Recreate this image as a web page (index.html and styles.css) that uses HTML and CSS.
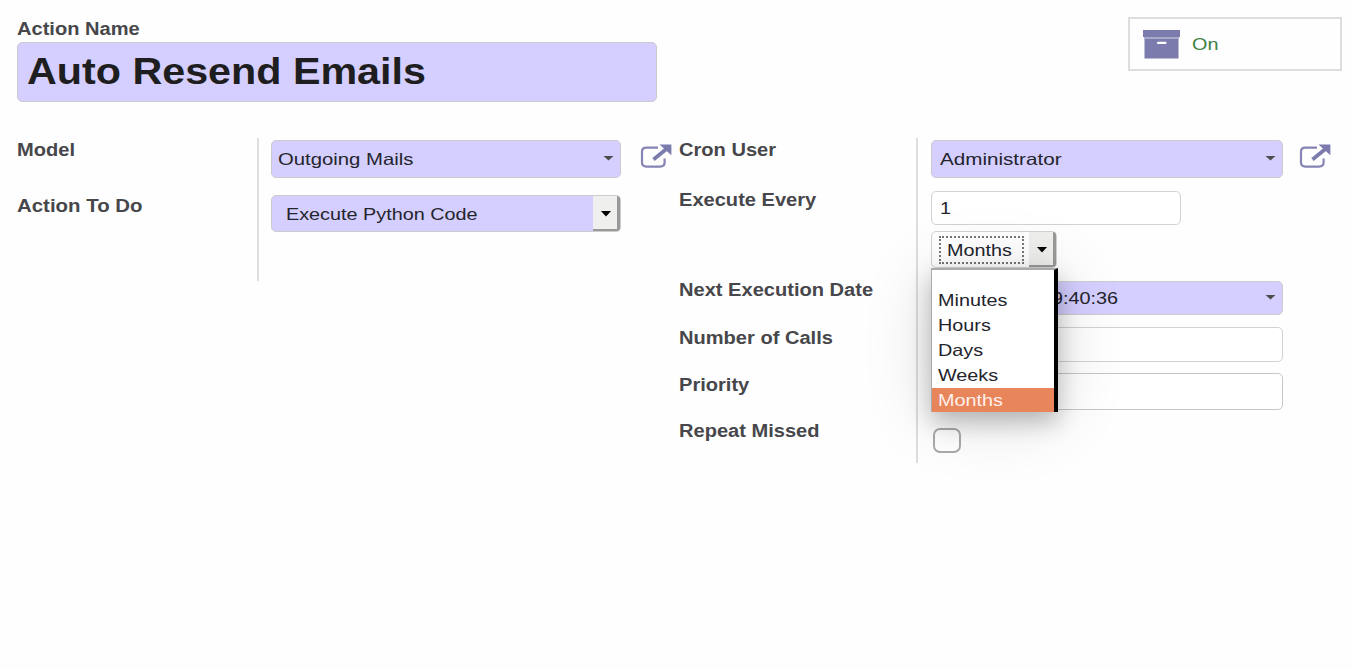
FILE: index.html
```html
<!DOCTYPE html>
<html lang="en">
<head>
<meta charset="utf-8">
<title>Auto Resend Emails</title>
<link rel="stylesheet" href="styles.css">
</head>
<body>
<svg class="defs" width="0" height="0">
  <symbol id="external" viewBox="0 0 32 26">
    <path d="M18 3.6H6.5Q2 3.6 2 7.6V18.6Q2 22.6 6.5 22.6H20Q24.6 22.6 24.6 18.6V14.5" fill="none" stroke="#8584b4" stroke-width="2.2"/>
    <path d="M13.5 15.5L27 4.5" fill="none" stroke="#7c7bad" stroke-width="3.7"/>
    <path d="M19.5 .6H31.4V11.2Z" fill="#7c7bad"/>
  </symbol>
</svg>
<header class="top">
  <div class="name">
    <label class="label"><span class="wide">Action Name</span></label>
    <div class="title"><span class="wide">Auto Resend Emails</span></div>
  </div>
  <div class="stat">
    <svg class="archive" viewBox="0 0 37 29"><path d="M0 0H37V7H0Z" fill="#7c7bad"/><path d="M1 7H36V9H1Z" fill="#aaa9cb"/><path d="M1.5 9H35.5V28.5H1.5Z" fill="#7c7bad"/><rect x="14" y="11.7" width="9.5" height="2.4" rx="1" fill="#fff"/></svg>
    <span class="wide">On</span>
  </div>
</header>
<main class="groups">
  <section class="group left">
    <div class="labels">
      <label class="label model"><span class="wide">Model</span></label>
      <label class="label todo"><span class="wide">Action To Do</span></label>
    </div>
    <div class="fields">
      <div class="row">
        <div class="field required many"><span class="wide outgoing">Outgoing Mails</span><i class="caret"></i></div>
        <svg class="external"><use href="#external"/></svg>
      </div>
      <div class="field required select action"><span class="wide">Execute Python Code</span><b class="arrow"><i></i></b></div>
    </div>
  </section>
  <section class="group right">
    <div class="labels">
      <label class="label user"><span class="wide">Cron User</span></label>
      <label class="label every"><span class="wide">Execute Every</span></label>
      <label class="label next"><span class="wide">Next Execution Date</span></label>
      <label class="label calls"><span class="wide">Number of Calls</span></label>
      <label class="label priority"><span class="wide">Priority</span></label>
      <label class="label"><span class="wide">Repeat Missed</span></label>
    </div>
    <div class="fields">
      <div class="row">
        <div class="field required many"><span class="wide admin">Administrator</span><i class="caret"></i></div>
        <svg class="external"><use href="#external"/></svg>
      </div>
      <div class="field interval"><span class="wide">1</span></div>
      <div class="field select unit">
        <div class="focus"><span class="wide">Months</span></div><b class="arrow"><i></i></b>
        <ul class="menu">
          <li></li>
          <li><span class="wide">Minutes</span></li>
          <li><span class="wide">Hours</span></li>
          <li><span class="wide">Days</span></li>
          <li><span class="wide">Weeks</span></li>
          <li class="active"><span class="wide">Months</span></li>
        </ul>
      </div>
      <div class="field required date"><span class="wide">9:40:36</span><i class="caret"></i></div>
      <div class="field number"></div>
      <div class="field prio"></div>
      <div class="check"></div>
    </div>
  </section>
</main>
</body>
</html>
```
FILE: styles.css
```css
* { box-sizing: border-box; }
body {
  margin: 0;
  height: 668px;
  overflow: hidden;
  background: #fefefe;
  color: #24242c;
  font: 16.5px/20px "Liberation Sans", Arial, sans-serif;
}
.defs { position: absolute; }
.wide {
  display: inline-block;
  white-space: nowrap;
  transform: scaleX(1.2);
  transform-origin: left center;
}
.label { display: block; font-weight: bold; font-size: 18px; color: #47474b; }
.label .wide { transform: scaleX(1.115); }
.todo .wide { transform: scaleX(1.135); }

.top { display: flex; justify-content: space-between; height: 138px; padding: 17px 12px 0 17px; }
.name { padding-top: 2px; }
.title {
  width: 640px;
  height: 60px;
  margin-top: 3px;
  padding: 0 9px;
  border: 1.5px solid #ccc;
  border-radius: 5px;
  background: #d4cfff;
  color: #1e1e20;
  font-weight: bold;
  font-size: 36px;
  line-height: 58px;
}
.title .wide { transform: scaleX(1.146); }
.stat {
  display: flex;
  align-items: center;
  gap: 12px;
  width: 214px;
  height: 54px;
  padding-left: 13px;
  border: 2px solid #dedede;
  color: #3c8344;
}
.archive { width: 37px; height: 29px; }

.groups { display: flex; padding-left: 17px; }
.group { display: flex; }
.left { width: 662px; height: 143px; }
.right { height: 325px; }
.labels { width: 240px; padding-top: 2px; }
.right .labels { width: 237px; }
.model { height: 56px; }
.user { height: 50px; }
.every { height: 90px; }
.next { height: 48px; }
.calls { height: 47px; }
.priority { height: 46px; }
.fields { padding: 2px 0 0 12px; border-left: 2px solid #dedede; }
.right .fields { padding-left: 13px; }
.row { display: flex; gap: 19px; }
.external { width: 32px; height: 26px; margin-top: 4px; }
.field {
  display: flex;
  align-items: center;
  width: 352px;
  padding: 0 7px;
  border: 1.5px solid #d2d2d2;
  border-radius: 5px;
  background: #fff;
}
.required { background: #d4cfff; border-color: #ccc; }
.left .field { width: 350px; }
.many { height: 38px; justify-content: space-between; padding: 0 6px; }
.right .many { padding-left: 8px; }
.right .row { gap: 16px; }
.outgoing { transform: scaleX(1.23); }
.admin { transform: scaleX(1.25); }
.many .wide { margin-bottom: 1px; }
.caret {
  width: 11px;
  height: 5px;
  margin: 0 0 2px auto;
  background: #4c4c4c;
  clip-path: polygon(0 0, 100% 0, 50% 100%);
}
.select { justify-content: space-between; padding: 0; }
.action { height: 37px; margin-top: 17px; padding-left: 14px; }
.arrow {
  display: flex;
  align-items: center;
  justify-content: center;
  align-self: stretch;
  width: 27px;
  border-right: 3px solid #999;
  border-bottom: 2px solid #999;
  border-radius: 0 3px 3px 0;
  background: #efefed;
}
.arrow i { width: 11px; height: 6px; margin: 2px 0 0 2px; background: #000; clip-path: polygon(0 0, 100% 0, 50% 100%); }
.interval { width: 250px; height: 34px; margin-top: 13px; padding-left: 8px; }
.right .unit { position: relative; width: 126px; height: 37px; margin-top: 6px; }
.focus {
  width: 85px;
  height: 28px;
  margin-left: 7px;
  padding-left: 6px;
  border: 2px dotted #777;
  line-height: 25px;
}
.date { height: 34px; margin-top: 13px; padding: 0 6px 0 120px; }
.number { height: 35px; margin-top: 12px; }
.prio { height: 37px; margin-top: 11px; border-color: #c7c7c7; }
.check { width: 28px; height: 25px; margin: 18px 0 0 2px; border: 2px solid #aaa; border-radius: 7px; background: #fff; }
.menu {
  position: absolute;
  z-index: 1;
  top: 36px;
  left: -1px;
  width: 127px;
  height: 144px;
  margin: 0;
  padding: 1px 0 0;
  border: solid #aaa;
  border-width: 2px 0 0 1px;
  border-right: 4px solid #000;
  background: #fff;
  list-style: none;
  box-shadow: 0 10px 22px rgba(0, 0, 0, .24), 0 5px 70px rgba(0, 0, 0, .14);
}
.menu li { height: 25px; padding-left: 6px; line-height: 25px; }
.menu li:first-child { height: 17px; }
.menu .active { height: 24px; background: #e9855b; color: #fff0ec; }
```
